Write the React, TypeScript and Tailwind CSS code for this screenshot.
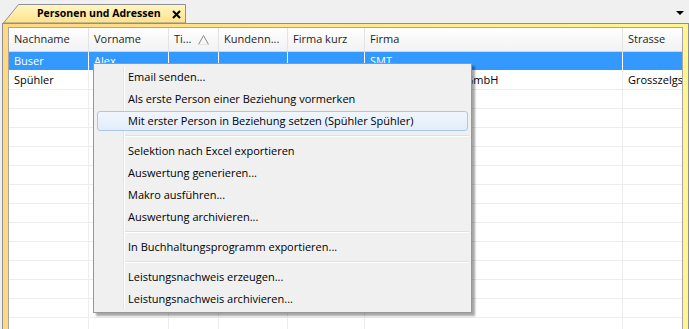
import React from "react";

const columns = [
	{ title: "Nachname", w: "w-[80px]" },
	{ title: "Vorname", w: "w-[80px]" },
	{ title: "Ti...", w: "w-[50px]", sort: true },
	{ title: "Kundenn...", w: "w-[69px]" },
	{ title: "Firma kurz", w: "w-[77px]" },
	{ title: "Firma", w: "w-[258px]" },
	{ title: "Strasse", w: "w-[80px]" },
];

const rows: string[][] = [
	["Buser", "Alex", "", "", "", "SMT", ""],
	["Spühler", "", "", "", "", "Spühler Treuhand GmbH", "Grosszelgstrasse 5"],
];

type MenuEntry = { label: string; hot?: boolean } | "sep";

const menu: MenuEntry[] = [
	{ label: "Email senden..." },
	{ label: "Als erste Person einer Beziehung vormerken" },
	{ label: "Mit erster Person in Beziehung setzen (Spühler Spühler)", hot: true },
	"sep",
	{ label: "Selektion nach Excel exportieren" },
	{ label: "Auswertung generieren..." },
	{ label: "Makro ausführen..." },
	{ label: "Auswertung archivieren..." },
	"sep",
	{ label: "In Buchhaltungsprogramm exportieren..." },
	"sep",
	{ label: "Leistungsnachweis erzeugen..." },
	{ label: "Leistungsnachweis archivieren..." },
];

function Tab() {
	return (
		<div className="relative ml-[3px] h-[19px] w-[184px]">
			<svg className="absolute inset-0" width="184" height="19" viewBox="0 0 184 19">
				<defs>
					<linearGradient id="tabfill" x1="0" y1="0" x2="0" y2="1">
						<stop offset="0" stopColor="#fff6c4" />
						<stop offset="1" stopColor="#ffe28c" />
					</linearGradient>
				</defs>
				<path d="M0.5 19 L15.5 0.5 L182.5 0.5 L182.5 19 Z" fill="url(#tabfill)" stroke="#8d8f95" />
			</svg>
			<div className="relative flex h-full items-center whitespace-nowrap pl-[34px] pt-[1px] text-[10.5px] font-bold text-black">
				<span>Personen und Adressen</span>
				<svg className="ml-[11px] mt-[1px] shrink-0" width="9" height="9" viewBox="0 0 9 9">
					<path d="M1 1 L8 8 M8 1 L1 8" stroke="#000" strokeWidth="2" />
				</svg>
			</div>
		</div>
	);
}

export default function App() {
	const empty = Array.from({ length: 13 }, () => ["", "", "", "", "", "", ""]);
	const allRows = [...rows, ...empty];

	return (
		<div className="relative flex h-[329px] w-[689px] flex-col overflow-hidden bg-[#f0f0f0] font-['Open_Sans',sans-serif] text-[11px] text-black">
			<div className="flex h-[23px] shrink-0 items-end justify-between">
				<Tab />
				<svg className="mb-[8px] mr-[5px]" width="8" height="4" viewBox="0 0 8 4">
					<path d="M0 0 H8 L4 4 Z" fill="#000" />
				</svg>
			</div>

			<div className="ml-[2px] min-h-0 flex-1 border-x border-t border-[#8d8f95] bg-gradient-to-r from-[#ffd97c] via-[#ffe890] to-[#fff68c] px-[5px] pt-[3px]">
				<div className="h-full overflow-hidden border-l border-t border-r border-[#a5a5a5] bg-white">
					<div className="flex h-[24px] border-b border-[#d5d5d5] bg-gradient-to-b from-white to-[#f2f2f2]">
						{columns.map((c) => (
							<div
								key={c.title}
								className={`${c.w} flex shrink-0 items-center justify-between border-r border-[#e3e3e3] pl-[5px] pr-[9px] text-[#1e1e1e]`}
							>
								<span>{c.title}</span>
								{c.sort && (
									<svg width="11" height="10" viewBox="0 0 11 10">
										<path d="M0.5 9.5 L5.5 0.5 L10.5 9.5" fill="none" stroke="#8a8a8a" />
										<path d="M0.5 9.5 H10.5" stroke="#e4e4e4" />
									</svg>
								)}
							</div>
						))}
					</div>
					{allRows.map((r, i) => (
						<div
							key={i}
							className={`flex h-[19px] border-b ${i === 0 ? "border-white bg-[#3399ff] text-white" : "border-[#ededed]"}`}
						>
							{columns.map((c, j) => (
								<div
									key={j}
									className={`${c.w} flex shrink-0 items-center overflow-hidden whitespace-nowrap border-r pl-[5px] ${i === 0 ? "border-white" : "border-[#ededed]"}`}
								>
									{r[j]}
								</div>
							))}
						</div>
					))}
				</div>
			</div>

			<div className="absolute left-[93px] top-[63px] w-[379px] border border-[#979797] bg-[#f0f0f0] py-[2px] shadow-[3px_3px_2px_rgba(0,0,0,0.35)]">
				<div className="absolute bottom-[2px] left-[29px] top-[2px] w-[2px] border-l border-r border-l-[#e2e3e3] border-r-white" />
				{menu.map((m, i) =>
					m === "sep" ? (
						<div key={i} className="flex h-[8px] items-center pl-[31px] pr-[2px]">
							<div className="h-[2px] w-full border-b border-t border-b-white border-t-[#e0e0e0]" />
						</div>
					) : (
						<div key={i} className="relative flex h-[22px] items-center px-[2px]">
							{m.hot && (
								<div className="absolute inset-x-[3px] inset-y-[1px] rounded-[3px] border border-[#a8c8ee] bg-gradient-to-b from-[#f1f6fd] to-[#e2ecfa]" />
							)}
							<span className="relative pl-[32px]">{m.label}</span>
						</div>
					),
				)}
			</div>
		</div>
	);
}
